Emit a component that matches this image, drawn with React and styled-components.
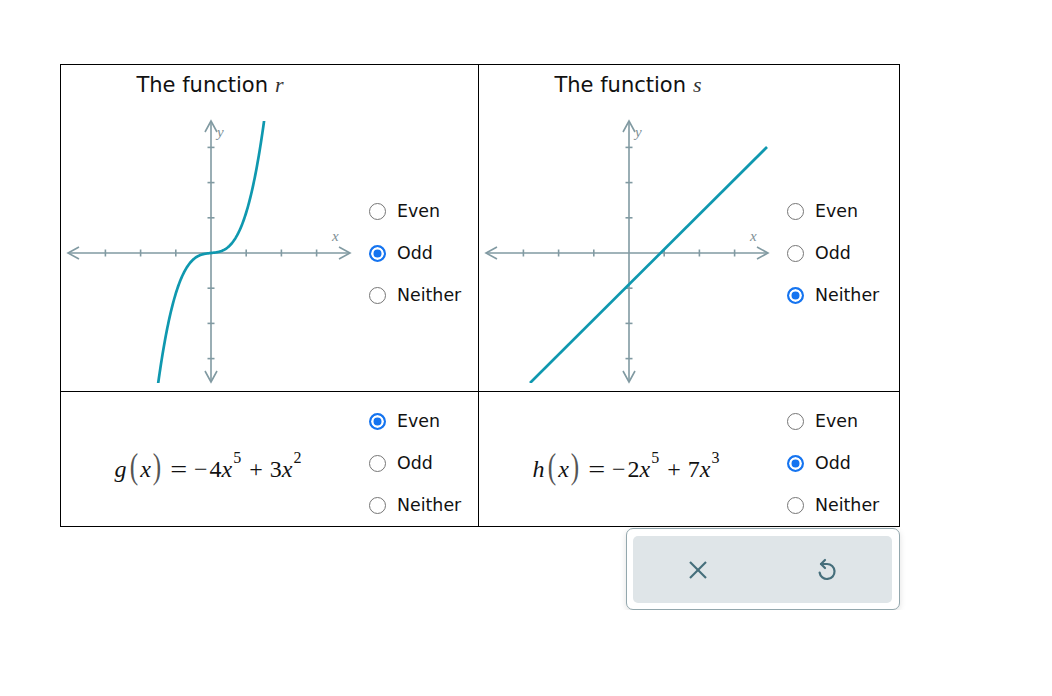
import React from 'react';
import styled, { createGlobalStyle } from 'styled-components';

const GlobalStyle = createGlobalStyle`
  body {
    margin: 0;
    background: #fff;
    font-family: 'DejaVu Sans', Verdana, sans-serif;
    color: #111;
  }
`;

const Page = styled.div`
  padding: 64px 0 0 60px;
`;

const Wrap = styled.div`
  display: flex;
  flex-direction: column;
  width: 840px;
`;

const Table = styled.div`
  display: grid;
  grid-template-columns: 418px 420px;
  border: 1px solid #000;
`;

const Cell = styled.div`
  box-sizing: border-box;
  padding: 8px 0 0 3px;
  height: ${(p) => (p.$top ? '327px' : '134px')};
  border-right: ${(p) => (p.$right ? '1px solid #000' : 'none')};
  border-bottom: ${(p) => (p.$top ? '1px solid #000' : 'none')};
`;

const Title = styled.div`
  width: 292px;
  text-align: center;
  font-size: 21px;
  line-height: 24px;
  margin-bottom: 20px;
`;

const TitleVar = styled.span`
  font-family: 'Liberation Serif', serif;
  font-style: italic;
  font-size: 22px;
  color: #333;
  margin-left: 7px;
`;

const Body = styled.div`
  display: grid;
  grid-template-columns: 292px auto;
  column-gap: 13px;
  align-items: center;
`;

const Choices = styled.div`
  display: flex;
  flex-direction: column;
  padding-top: ${(p) => (p.$nudge ? '2px' : '0')};
`;

const Choice = styled.label`
  display: flex;
  align-items: center;
  gap: 11px;
  height: 42px;
  font-size: 17.4px;
`;

const Dot = styled.span`
  box-sizing: border-box;
  width: 17px;
  height: 17px;
  border-radius: 50%;
  border: ${(p) => (p.$on ? '2px solid #1574f0' : '1.5px solid #767676')};
  background: ${(p) => (p.$on ? '#1574f0' : '#fff')};
  box-shadow: ${(p) => (p.$on ? 'inset 0 0 0 2.5px #fff' : 'none')};
`;

const Formula = styled.div`
  padding-right: 4px;
  text-align: center;
  font-family: 'Liberation Serif', 'Times New Roman', serif;
  font-size: 24px;
  line-height: 30px;
  color: #111;
  white-space: nowrap;
`;

const V = styled.span`
  font-style: italic;
`;

const Paren = styled.span`
  display: inline-block;
  font-size: 35px;
  line-height: 20px;
  vertical-align: -1px;
  color: #555;
  transform: scaleX(0.72);
  margin: 0 ${(p) => p.$m || 0}px;
`;

const Op = styled.span`
  display: inline-block;
  margin: 0 ${(p) => p.$r}px 0 ${(p) => p.$l}px;
  transform: ${(p) => (p.$wide ? 'scaleX(1.25)' : 'none')};
`;

const Sup = styled.span`
  font-size: 16px;
  vertical-align: 14px;
  margin-left: 1px;
`;

const Panel = styled.div`
  align-self: flex-end;
  margin-top: 1px;
  width: 274px;
  box-sizing: border-box;
  border: 1px solid #93a7ad;
  border-radius: 7px;
  padding: 7px 7px 6px 6px;
  background: #fff;
  box-shadow: 0 2px 6px rgba(0, 0, 0, 0.12);
`;

const Buttons = styled.div`
  display: flex;
  height: 67px;
  background: #dfe5e8;
  border-radius: 5px;
`;

const IconButton = styled.button`
  flex: 1;
  display: flex;
  align-items: center;
  justify-content: center;
  border: none;
  background: transparent;
  padding: 0;
  color: #456e7b;
`;

const AXIS = '#819aa2';
const CURVE = '#0f98af';
const U = 35.2;
const OX = 147;
const OY = 136;

function Graph({ id, curve }) {
  const ticks = [-3, -2, -1, 1, 2, 3];
  return (
    <svg width="292" height="270" viewBox="0 0 292 270">
      <defs>
        <clipPath id={id}>
          <rect x="0" y="4" width="292" height="262" />
        </clipPath>
      </defs>
      <g stroke={AXIS} strokeWidth="1.6" fill="none">
        <line x1="4" y1={OY} x2="286" y2={OY} />
        <line x1={OX} y1="4" x2={OX} y2="265" />
        <polyline points={`15,${OY - 6} 4,${OY} 15,${OY + 6}`} />
        <polyline points={`275,${OY - 6} 286,${OY} 275,${OY + 6}`} />
        <polyline points={`${OX - 6},15 ${OX},4 ${OX + 6},15`} />
        <polyline points={`${OX - 6},254 ${OX},265 ${OX + 6},254`} />
        {ticks.map((t) => (
          <line key={'x' + t} x1={OX + t * U} y1={OY - 3.5} x2={OX + t * U} y2={OY + 3.5} />
        ))}
        {ticks.map((t) => (
          <line key={'y' + t} x1={OX - 3.5} y1={OY - t * U} x2={OX + 3.5} y2={OY - t * U} />
        ))}
      </g>
      <text x="268" y="124" fill="#7e8f95" fontSize="15" fontStyle="italic" fontFamily="Liberation Serif, serif">x</text>
      <text x="153" y="20" fill="#7e8f95" fontSize="15" fontStyle="italic" fontFamily="Liberation Serif, serif">y</text>
      <g clipPath={`url(#${id})`}>
        <path d={curve} stroke={CURVE} strokeWidth="2.7" fill="none" />
      </g>
    </svg>
  );
}

function cubicPath() {
  const pts = [];
  for (let x = -1.8; x <= 1.75; x += 0.02) {
    const y = 1.05 * x * x * x + 0.1 * x;
    pts.push(`${(OX + x * U).toFixed(2)},${(OY - y * U).toFixed(2)}`);
  }
  return 'M' + pts.join(' L');
}

const linePath = `M48 266 L285 30`;

function RadioSet({ value, nudge }) {
  return (
    <Choices $nudge={nudge}>
      {['Even', 'Odd', 'Neither'].map((o) => (
        <Choice key={o}>
          <Dot $on={o === value} />
          {o}
        </Choice>
      ))}
    </Choices>
  );
}

function Poly({ name, a, b, p, q }) {
  return (
    <Formula>
      <V>{name}</V>
      <Paren $m={1}>(</Paren>
      <V>x</V>
      <Paren>)</Paren>
      <Op $l={9} $r={9} $wide>=</Op>
      <Op $l={0} $r={2}>−</Op>
      {a}
      <V>x</V>
      <Sup>{p}</Sup>
      <Op $l={8} $r={7}>+</Op>
      {b}
      <V>x</V>
      <Sup>{q}</Sup>
    </Formula>
  );
}

function CloseIcon() {
  return (
    <svg width="20" height="20" viewBox="0 0 20 20" fill="none" stroke="currentColor" strokeWidth="2.2">
      <line x1="2" y1="2" x2="18" y2="18" />
      <line x1="18" y1="2" x2="2" y2="18" />
    </svg>
  );
}

function UndoIcon() {
  return (
    <svg width="22" height="24" viewBox="0 0 22 24" fill="none" stroke="currentColor" strokeWidth="2.2" strokeLinecap="round" strokeLinejoin="round">
      <polyline points="9,2 5,6 9,10" />
      <path d="M5 6 H11 A7.5 7.5 0 1 1 3.6 14.5" />
    </svg>
  );
}

export default function App() {
  return (
    <Page>
      <GlobalStyle />
      <Wrap>
        <Table>
          <Cell $top $right>
            <Title>
              The function<TitleVar>r</TitleVar>
            </Title>
            <Body>
              <Graph id="clip-r" curve={cubicPath()} />
              <RadioSet value="Odd" nudge />
            </Body>
          </Cell>
          <Cell $top>
            <Title>
              The function<TitleVar>s</TitleVar>
            </Title>
            <Body>
              <Graph id="clip-s" curve={linePath} />
              <RadioSet value="Neither" nudge />
            </Body>
          </Cell>
          <Cell $right>
            <Body>
              <Poly name="g" a="4" b="3" p="5" q="2" />
              <RadioSet value="Even" />
            </Body>
          </Cell>
          <Cell>
            <Body>
              <Poly name="h" a="2" b="7" p="5" q="3" />
              <RadioSet value="Odd" />
            </Body>
          </Cell>
        </Table>
        <Panel>
          <Buttons>
            <IconButton aria-label="Clear">
              <CloseIcon />
            </IconButton>
            <IconButton aria-label="Reset">
              <UndoIcon />
            </IconButton>
          </Buttons>
        </Panel>
      </Wrap>
    </Page>
  );
}
